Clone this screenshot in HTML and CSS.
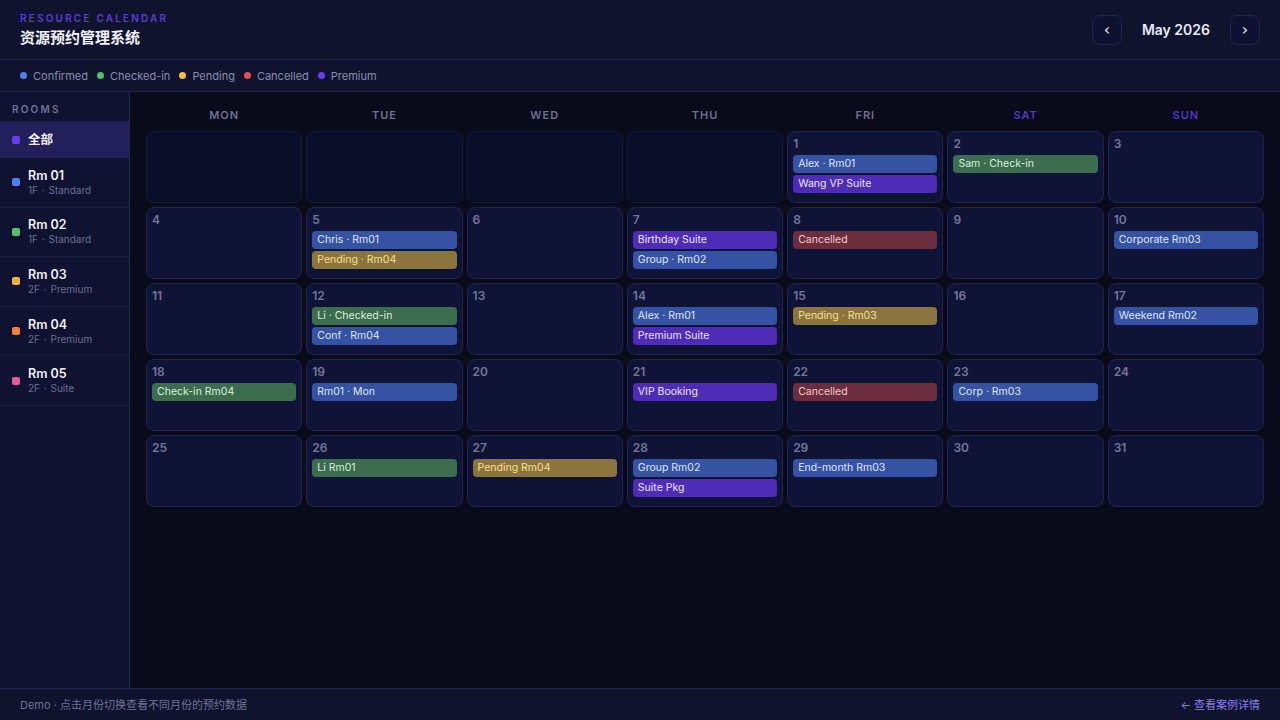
FILE: index.html
```html
<!DOCTYPE html>
<html lang="zh">
<head>
<meta charset="utf-8">
<title>资源预约管理系统</title>
<link rel="stylesheet" href="styles.css">
</head>
<body>
<div class="app">
  <header class="topbar">
    <div class="brand">
      <div class="eyebrow">RESOURCE CALENDAR</div>
      <div class="title">资源预约管理系统</div>
    </div>
    <div class="monthnav">
      <button class="navbtn">‹</button>
      <div class="month">May 2026</div>
      <button class="navbtn">›</button>
    </div>
  </header>
  <div class="legend">
    <span class="lg"><i class="dot d-blue"></i>Confirmed</span>
    <span class="lg"><i class="dot d-green"></i>Checked-in</span>
    <span class="lg"><i class="dot d-yellow"></i>Pending</span>
    <span class="lg"><i class="dot d-red"></i>Cancelled</span>
    <span class="lg"><i class="dot d-purple"></i>Premium</span>
  </div>
  <div class="main">
    <aside class="sidebar">
      <div class="side-label">ROOMS</div>
      <div class="room active"><i class="sq s-purple"></i><div class="rname">全部</div></div>
      <div class="room"><i class="sq s-blue"></i><div><div class="rname">Rm 01</div><div class="rsub">1F · Standard</div></div></div>
      <div class="room"><i class="sq s-green"></i><div><div class="rname">Rm 02</div><div class="rsub">1F · Standard</div></div></div>
      <div class="room"><i class="sq s-yellow"></i><div><div class="rname">Rm 03</div><div class="rsub">2F · Premium</div></div></div>
      <div class="room"><i class="sq s-orange"></i><div><div class="rname">Rm 04</div><div class="rsub">2F · Premium</div></div></div>
      <div class="room"><i class="sq s-pink"></i><div><div class="rname">Rm 05</div><div class="rsub">2F · Suite</div></div></div>
    </aside>
    <section class="calendar">
      <div class="wd">MON</div><div class="wd">TUE</div><div class="wd">WED</div><div class="wd">THU</div><div class="wd">FRI</div><div class="wd we">SAT</div><div class="wd we">SUN</div>

      <div class="cell empty"></div>
      <div class="cell empty"></div>
      <div class="cell empty"></div>
      <div class="cell empty"></div>
      <div class="cell"><div class="num">1</div><div class="ev blue">Alex · Rm01</div><div class="ev purple">Wang VP Suite</div></div>
      <div class="cell"><div class="num">2</div><div class="ev green">Sam · Check-in</div></div>
      <div class="cell"><div class="num">3</div></div>

      <div class="cell"><div class="num">4</div></div>
      <div class="cell"><div class="num">5</div><div class="ev blue">Chris · Rm01</div><div class="ev yellow">Pending · Rm04</div></div>
      <div class="cell"><div class="num">6</div></div>
      <div class="cell"><div class="num">7</div><div class="ev purple">Birthday Suite</div><div class="ev blue">Group · Rm02</div></div>
      <div class="cell"><div class="num">8</div><div class="ev red">Cancelled</div></div>
      <div class="cell"><div class="num">9</div></div>
      <div class="cell"><div class="num">10</div><div class="ev blue">Corporate Rm03</div></div>

      <div class="cell"><div class="num">11</div></div>
      <div class="cell"><div class="num">12</div><div class="ev green">Li · Checked-in</div><div class="ev blue">Conf · Rm04</div></div>
      <div class="cell"><div class="num">13</div></div>
      <div class="cell"><div class="num">14</div><div class="ev blue">Alex · Rm01</div><div class="ev purple">Premium Suite</div></div>
      <div class="cell"><div class="num">15</div><div class="ev yellow">Pending · Rm03</div></div>
      <div class="cell"><div class="num">16</div></div>
      <div class="cell"><div class="num">17</div><div class="ev blue">Weekend Rm02</div></div>

      <div class="cell"><div class="num">18</div><div class="ev green">Check-in Rm04</div></div>
      <div class="cell"><div class="num">19</div><div class="ev blue">Rm01 · Mon</div></div>
      <div class="cell"><div class="num">20</div></div>
      <div class="cell"><div class="num">21</div><div class="ev purple">VIP Booking</div></div>
      <div class="cell"><div class="num">22</div><div class="ev red">Cancelled</div></div>
      <div class="cell"><div class="num">23</div><div class="ev blue">Corp · Rm03</div></div>
      <div class="cell"><div class="num">24</div></div>

      <div class="cell"><div class="num">25</div></div>
      <div class="cell"><div class="num">26</div><div class="ev green">Li Rm01</div></div>
      <div class="cell"><div class="num">27</div><div class="ev yellow">Pending Rm04</div></div>
      <div class="cell"><div class="num">28</div><div class="ev blue">Group Rm02</div><div class="ev purple">Suite Pkg</div></div>
      <div class="cell"><div class="num">29</div><div class="ev blue">End-month Rm03</div></div>
      <div class="cell"><div class="num">30</div></div>
      <div class="cell"><div class="num">31</div></div>
    </section>
  </div>
  <footer class="footer">
    <div class="foot-note">Demo · 点击月份切换查看不同月份的预约数据</div>
    <a class="foot-link">← 查看案例详情</a>
  </footer>
</div>
</body>
</html>
```
FILE: styles.css
```css
* { box-sizing: border-box; margin: 0; padding: 0; }
html, body { width: 1280px; height: 720px; overflow: hidden; }
body {
  background: #090a1a;
  font-family: "Inter", "Noto Sans CJK SC", "Noto Sans", sans-serif;
  color: #e8eaf6;
}
.app { display: flex; flex-direction: column; height: 720px; }

.topbar {
  height: 60px;
  background: #10132e;
  border-bottom: 1px solid #22264a;
  display: flex;
  align-items: center;
  justify-content: space-between;
  padding: 0 20px;
}
.brand { display: flex; flex-direction: column; gap: 3px; margin-top: 1px; }
.eyebrow {
  font-size: 10px;
  letter-spacing: 2.2px;
  color: #5b3cd8;
  font-weight: 600;
  line-height: 13px;
}
.title { font-size: 15px; font-weight: 700; color: #f2f3fb; line-height: 20px; }

.monthnav { display: flex; align-items: center; gap: 20px; }
.navbtn {
  width: 30px; height: 30px;
  border-radius: 8px;
  border: 1px solid #23284d;
  background: #0e1230;
  color: #e6e8f5;
  font-size: 16px;
  font-family: "DejaVu Sans", sans-serif;
  display: flex; align-items: center; justify-content: center;
  line-height: 1;
}
.month { font-size: 14px; font-weight: 600; color: #e8eaf6; text-align: center; }

.legend {
  height: 32px;
  background: #10132e;
  border-bottom: 1px solid #22264a;
  display: flex;
  align-items: center;
  gap: 9px;
  padding: 0 20px;
  font-size: 11px;
  color: #8a8db0;
}
.lg { display: flex; align-items: center; gap: 6px; }
.dot { width: 7px; height: 7px; border-radius: 50%; display: inline-block; }
.d-blue { background: #4f80f0; }
.d-green { background: #4fc26a; }
.d-yellow { background: #f0c03e; }
.d-red { background: #e05252; }
.d-purple { background: #6a3cf0; }

.main { flex: 1; display: flex; min-height: 0; }
.sidebar {
  width: 130px;
  background: #0f1230;
  border-right: 1px solid #22264a;
  display: flex;
  flex-direction: column;
}
.side-label {
  height: 30px;
  padding: 11px 12px 0;
  font-size: 10px;
  letter-spacing: 2.2px;
  color: #6f7396;
  font-weight: 600;
  border-bottom: 1px solid #1c2044;
}
.room {
  display: flex;
  align-items: center;
  gap: 8px;
  padding: 0 12px;
  height: 49.6px;
  border-bottom: 1px solid #1c2044;
}
.room.active { height: 36px; background: #221f5a; border-bottom: none; }
.sq { width: 8px; height: 8px; border-radius: 2px; display: inline-block; flex: none; }
.s-purple { background: #6a3cf0; }
.s-blue { background: #4f80f0; }
.s-green { background: #4fc26a; }
.s-yellow { background: #f0b03e; }
.s-orange { background: #ef8238; }
.s-pink { background: #e05a9a; }
.rname { font-size: 12.5px; font-weight: 600; color: #f0f1fa; line-height: 16px; }
.rsub { font-size: 10px; color: #6a6e92; line-height: 13px; word-spacing: 1px; }

.calendar {
  flex: 1;
  padding: 12px 16px 0;
  display: grid;
  grid-template-columns: repeat(7, 1fr);
  grid-template-rows: 23px repeat(5, 72px);
  gap: 4px;
  align-content: start;
}
.wd {
  text-align: center;
  font-size: 11px;
  font-weight: 600;
  letter-spacing: 1px;
  color: #6d7194;
  line-height: 23px;
}
.wd.we { color: #5436c8; }

.cell {
  background: #0f1436;
  border: 1px solid #1f2450;
  border-radius: 8px;
  padding: 4px 5px 5px;
  display: flex;
  flex-direction: column;
  gap: 2px;
}
.cell.empty { background: #0b0e28; border-color: #161a3c; }
.num {
  font-size: 12px;
  font-weight: 600;
  color: #73779a;
  line-height: 15px;
  margin-bottom: 2px;
}
.ev {
  height: 18px;
  border-radius: 4px;
  font-size: 10.5px;
  line-height: 18px;
  padding: 0 5px;
  white-space: nowrap;
  overflow: hidden;
}
.ev.blue { background: #3553a2; color: #dfe6ff; }
.ev.green { background: #3b6d4e; color: #d8f2dc; }
.ev.yellow { background: #8c743f; color: #f6e08c; }
.ev.red { background: #6c2e3f; color: #f2c9cd; }
.ev.purple { background: #4f2cb8; color: #ece4ff; }

.footer {
  height: 32px;
  background: #10132e;
  border-top: 1px solid #22264a;
  display: flex;
  align-items: center;
  justify-content: space-between;
  padding: 0 20px 1px;
  font-size: 11px;
}
.foot-note { color: #6e7196; }
.foot-link { color: #8a7ef0; text-decoration: none; }
```
